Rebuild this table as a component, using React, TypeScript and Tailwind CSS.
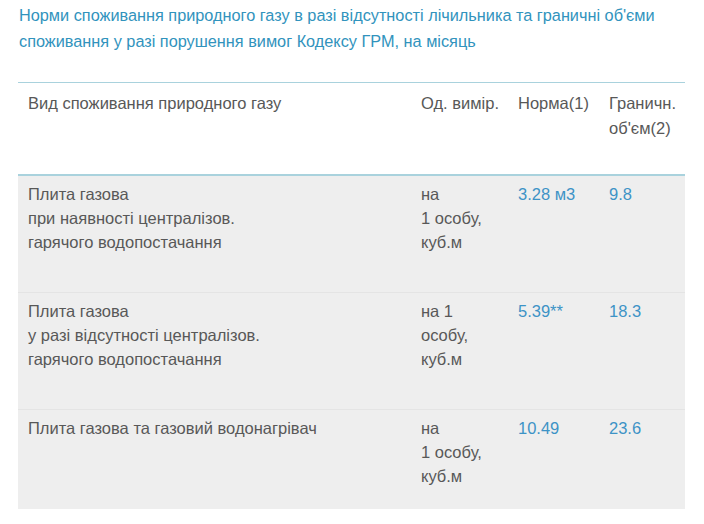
import React from "react";

const rows = [
  {
    name: ["Плита газова", "при наявності централізов.", "гарячого водопостачання"],
    unit: ["на", "1 особу,", "куб.м"],
    norm: "3.28 м3",
    lim: "9.8",
    h: "h-[117px]",
  },
  {
    name: ["Плита газова", "у разі відсутності централізов.", "гарячого водопостачання"],
    unit: ["на 1", "особу,", "куб.м"],
    norm: "5.39**",
    lim: "18.3",
    h: "h-[117px]",
  },
  {
    name: ["Плита газова та газовий водонагрівач"],
    unit: ["на", "1 особу,", "куб.м"],
    norm: "10.49",
    lim: "23.6",
    h: "h-[99px]",
  },
];

export default function App() {
  return (
    <div
      className="w-[704px] h-[524px] bg-white overflow-hidden text-[16.5px] text-[#585858]"
      style={{ fontFamily: '"Liberation Sans", Arial, sans-serif' }}
    >
      <div className="pl-[19px] pt-[2px] pr-2 text-[16.3px] leading-[26px] text-[#3193bd] whitespace-nowrap">
        Норми споживання природного газу в разі відсутності лічильника та граничні об'єми
        <br />
        споживання у разі порушення вимог Кодексу ГРМ, на місяць
      </div>
      <div className="ml-[18px] mt-[28px] w-[667px] border-t border-[#a9d2dd]">
        <div className="grid grid-cols-[393px_97px_91px_86px] h-[93px] border-b-2 border-[#a9d2dd] leading-[25px] pt-[8px]">
          <div className="pl-[10px]">Вид споживання природного газу</div>
          <div className="pl-[10px]">Од. вимір.</div>
          <div className="pl-[10px]">Норма(1)</div>
          <div className="pl-[10px]">
            Граничн.
            <br />
            об'єм(2)
          </div>
        </div>
        {rows.map((r, i) => (
          <div
            key={i}
            className={`grid grid-cols-[393px_97px_91px_86px] bg-[#eeeeee] leading-[24px] pt-[6px] ${r.h} ${
              i < rows.length - 1 ? "border-b border-[#e4e4e4]" : ""
            }`}
          >
            <div className="pl-[10px]">
              {r.name.map((t, j) => (
                <div key={j}>{t}</div>
              ))}
            </div>
            <div className="pl-[10px]">
              {r.unit.map((t, j) => (
                <div key={j}>{t}</div>
              ))}
            </div>
            <div className="pl-[10px] text-[#3d93c6]">{r.norm}</div>
            <div className="pl-[10px] text-[#3d93c6]">{r.lim}</div>
          </div>
        ))}
      </div>
    </div>
  );
}
